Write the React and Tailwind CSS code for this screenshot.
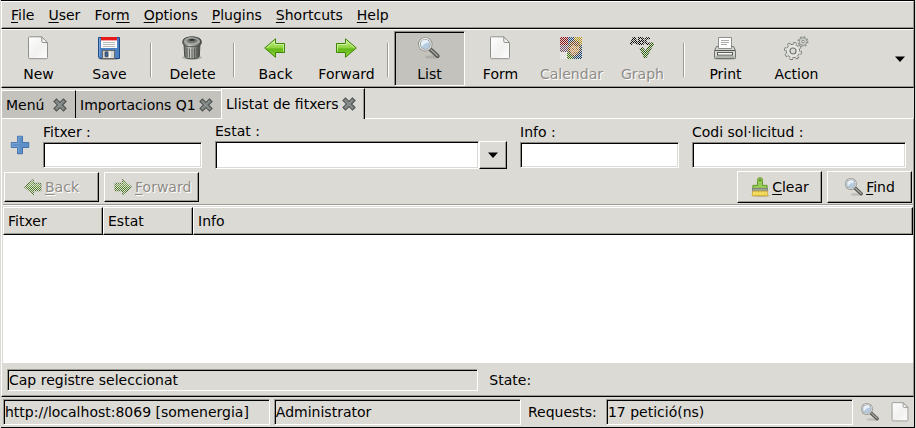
import React from "react";

const sunken =
  "border pl-px border-t-[#9c9a91] border-l-[#9c9a91] border-b-white border-r-white shadow-[inset_1px_1px_0_#000]";
const entry =
  "block w-full rounded-none bg-white px-1 outline-none border border-t-[#8d8a83] border-l-[#8d8a83] border-b-white border-r-white shadow-[inset_1px_1px_0_#000,inset_-1px_-1px_0_#dcdad5]";
const raised =
  "border border-t-white border-l-white border-b-black border-r-black shadow-[inset_-1px_-1px_0_#9c9a91]";
const ghost = "text-[#8e8c87] [text-shadow:1px_1px_0_#fff]";

function Icon({ size = 24, disabled, id, children }) {
  return (
    <svg width={size} height={size} viewBox="0 0 24 24" className="block shrink-0" aria-hidden="true">
      {children}
      {disabled && (
        <>
          <defs>
            <pattern id={id} width={48 / size} height={48 / size} patternUnits="userSpaceOnUse">
              <rect width={24 / size} height={24 / size} fill="#dcdad5" />
              <rect x={24 / size} y={24 / size} width={24 / size} height={24 / size} fill="#dcdad5" />
            </pattern>
          </defs>
          <rect width="24" height="24" fill={`url(#${id})`} />
        </>
      )}
    </svg>
  );
}

function PageIcon({ size }) {
  return (
    <Icon size={size}>
      <defs>
        <linearGradient id="sheet" x1="0" y1="0" x2="1" y2="1">
          <stop offset="0" stopColor="#fff" />
          <stop offset=".55" stopColor="#f1f1f0" />
          <stop offset="1" stopColor="#fdfdfd" />
        </linearGradient>
      </defs>
      <path d="M3.5 .8H15.8L21.5 6.5V21.5Q21.5 22.7 20.3 22.7H3.7Q2.5 22.7 2.5 21.5V1.8Q2.5 .8 3.5 .8Z" fill="url(#sheet)" stroke="#8e908c" />
      <path d="M15.8 1V5.2Q15.8 6.5 17 6.5H21.4Z" fill="#f7f7f6" stroke="#8e908c" />
    </Icon>
  );
}

function SaveIcon() {
  return (
    <Icon>
      <ellipse cx="12" cy="22.6" rx="11" ry="1.2" fill="#8b8a86" />
      <path d="M1.5 1.5H22.5V22.5H3L1.5 21Z" fill="#4b80c1" stroke="#204a87" />
      <path d="M2.5 2V20.5" stroke="#79a5d8" />
      <rect x="4" y="1" width="16" height="11" fill="#fbfbfb" />
      <rect x="4" y="1" width="16" height="3.4" fill="#e8191a" />
      <path d="M6 6.5H18M6 8.5H18M6 10.5H18" stroke="#b9bcb8" />
      <rect x="5.5" y="14.5" width="12" height="8" fill="#d4d6d3" stroke="#676a67" />
      <rect x="8" y="15.8" width="3" height="5" rx=".5" fill="#3c66a0" stroke="#333" strokeWidth=".6" />
      <path d="M12.8 15.5V22" stroke="#f8f8f8" strokeWidth="1.5" />
    </Icon>
  );
}

function TrashIcon() {
  return (
    <Icon>
      <defs>
        <linearGradient id="can" x1="0" x2="1">
          <stop offset="0" stopColor="#555753" />
          <stop offset=".35" stopColor="#d0d2cd" />
          <stop offset=".7" stopColor="#858782" />
          <stop offset="1" stopColor="#3d3f3c" />
        </linearGradient>
      </defs>
      <ellipse cx="12" cy="21.5" rx="10" ry="2" fill="#aeada8" />
      <path d="M4 8H20L19.3 20Q18.8 22.8 12 22.8T4.7 20Z" fill="url(#can)" stroke="#4d4f4c" />
      <path d="M7 12V21M9.5 12.5V21.8M12 12.5V22M14.5 12.5V21.8M17 12V21" stroke="#555753" strokeWidth=".9" />
      <path d="M2.8 5.8Q2.8 2.3 7 1.6L10 .8H14L17 1.6Q21.2 2.3 21.2 5.8V7.3Q20 10.8 12 10.8T2.8 7.3Z" fill="url(#can)" stroke="#4d4f4c" />
      <ellipse cx="12" cy="5.4" rx="8" ry="3.6" fill="#a7a9a4" />
      <ellipse cx="12" cy="4.8" rx="5.5" ry="2.4" fill="#777975" />
      <path d="M9 3.5Q12 1.8 15 3.5L14.2 5.3Q12 4 9.8 5.3Z" fill="#343634" />
    </Icon>
  );
}

function ArrowIcon({ right, size, disabled, id }) {
  const [light, mid, deep, edge] = disabled
    ? ["#9fc47a", "#6c9d45", "#4b8122", "#2a5608"]
    : ["#c3ee8d", "#92d441", "#63b818", "#3c8703"];
  return (
    <Icon size={size} disabled={disabled} id={id}>
      <defs>
        <linearGradient id={id + "fill"} x1="0" y1="0" x2="0" y2="1">
          <stop offset="0" stopColor={light} />
          <stop offset=".48" stopColor={mid} />
          <stop offset=".55" stopColor={deep} />
          <stop offset="1" stopColor={mid} />
        </linearGradient>
      </defs>
      <g transform={right ? "translate(24 0) scale(-1 1)" : undefined}>
        <path d="M1.7 12L12.5 2.8V7.5H21.5V16.5H12.5V21.3Z" fill={`url(#${id}fill)`} stroke={edge} strokeLinejoin="round" />
        {!disabled && (
          <path d="M3.5 12L11.5 5V8.5H20.5V15.5" fill="none" stroke="#d5f5a8" strokeWidth=".8" />
        )}
      </g>
    </Icon>
  );
}

function SearchIcon({ size }) {
  return (
    <Icon size={size}>
      <ellipse cx="15" cy="21" rx="7" ry="1.6" fill="#7d7c77" opacity=".3" />
      <path d="M13.2 13.2L20.6 20" stroke="#555753" strokeWidth="4.2" strokeLinecap="round" />
      <path d="M14 13.8L20.6 19.8" stroke="#a9aca7" strokeWidth="1.4" strokeLinecap="round" strokeDasharray="1.4 .8" />
      <circle cx="8.3" cy="8.3" r="6" fill="#b6cbdf" stroke="#7f827d" strokeWidth="2.3" />
      <circle cx="8.3" cy="8.3" r="5.9" fill="none" stroke="#eeeeec" strokeWidth="1.1" />
      <path d="M4 8.3A4.3 4.3 0 0 1 12.3 6.5Q7 6.7 5 11Q4 10 4 8.3Z" fill="#e9f1f8" />
    </Icon>
  );
}

function CalendarIcon() {
  return (
    <Icon disabled id="calendar-stipple">
      <rect x="1" y="1" width="22" height="22" fill="#555" />
      <rect x="1" y="1" width="8" height="8" fill="#8d0a10" />
      <rect x="9" y="1" width="6" height="8" fill="#20457a" />
      <rect x="15" y="1" width="8" height="8" fill="#b8960c" />
      <rect x="1" y="9" width="8" height="7" fill="#75506f" />
      <rect x="9" y="9" width="6" height="7" fill="#a8590c" />
      <rect x="15" y="9" width="8" height="7" fill="#1d4870" />
      <rect x="1" y="16" width="7" height="7" fill="#f0f0ee" />
      <rect x="8" y="16" width="6" height="7" fill="#437a10" />
      <rect x="14" y="16" width="9" height="7" fill="#0f3770" />
      <path d="M10 11Q11 5 16 5Q21 6 21 13Q20 19 15 20Q10 19 10 11Z" fill="#d49a55" stroke="#69401a" strokeWidth="1.5" />
      <path d="M10 8Q15 3 21 9L18 11L14 9L11 12Z" fill="#7d4814" />
      <path d="M13 13H15M17 13H19M14 17H18" stroke="#69401e" />
    </Icon>
  );
}

function SpellIcon() {
  return (
    <Icon disabled id="spell-stipple">
      <g fill="none" stroke="#000" strokeWidth="2.1">
        <path d="M.7 8.5L3.4 2H4.7L7.2 8.5M2.2 6.3H5.8" />
        <path d="M9 2V8H11.5Q13.5 8 13.5 6.5T11.5 5H9H11.3Q13 5 13 3.5T11.3 2Z" />
        <path d="M20 3Q17 1 15.7 3.3Q15 5 16 7Q17.8 8.8 20 7.2" />
      </g>
      <path d="M10.5 13L12.5 12L15.5 16L21.5 7L23.5 7.5L16 21.2H14.5Z" fill="#3f8210" stroke="#1f4c04" strokeWidth="1.4" />
    </Icon>
  );
}

function PrintIcon() {
  return (
    <Icon>
      <ellipse cx="12" cy="22.4" rx="11.5" ry="1.4" fill="#b0afaa" />
      <path d="M3.5 10.5H20.5L22.5 14.5V21.5Q22.5 22.5 21.5 22.5H2.5Q1.5 22.5 1.5 21.5V14.5Z" fill="#d3d7cf" stroke="#70736e" />
      <path d="M5.5 1.5H18.5V12.5H5.5Z" fill="#fff" stroke="#8d908a" />
      <path d="M8 4.5H16M8 6.5H16M8 8.5H14" stroke="#a9aca7" />
      <path d="M2 14.5H22" stroke="#555753" />
      <rect x="4.5" y="16.5" width="15" height="2.6" fill="#fafafa" stroke="#5c5e5a" />
      <path d="M2.5 21H21.5" stroke="#8e918b" />
    </Icon>
  );
}

function GearsIcon() {
  return (
    <svg width="26" height="24" viewBox="0 0 26 24" className="block shrink-0" aria-hidden="true">
      <g fill="none">
        <circle cx="10" cy="15" r="7.5" stroke="#777975" strokeWidth="3" strokeDasharray="3.2 2.69" />
        <circle cx="10" cy="15" r="6.8" fill="#e4e6e1" stroke="#777975" />
        <circle cx="10" cy="15" r="7.2" stroke="#e4e6e1" strokeWidth="1.8" strokeDasharray="2.4 3.25" strokeDashoffset="-.4" />
        <circle cx="10" cy="15" r="3" fill="#dcdad5" stroke="#777975" strokeWidth="1.2" />
        <circle cx="20" cy="5.5" r="4.5" stroke="#92948f" strokeWidth="2" strokeDasharray="1.8 1.73" />
        <circle cx="20" cy="5.5" r="3.9" fill="#cfd1cc" stroke="#92948f" />
        <circle cx="20" cy="5.5" r="1.3" fill="#eee" stroke="#858782" />
      </g>
    </svg>
  );
}

function BrushIcon() {
  return (
    <Icon size={20}>
      <ellipse cx="13" cy="22.5" rx="10" ry="1.3" fill="#b3b09f" />
      <path d="M9 10V3.8Q9 .8 12 .8T15 3.8V10H20.5V15H3.5V10Z" fill="#99ca57" stroke="#5f9a28" strokeWidth="1.2" />
      <circle cx="12" cy="4" r="1.2" fill="#417b12" />
      <rect x="3" y="13.5" width="18" height="3.5" fill="#9ba098" stroke="#6b6f68" strokeWidth=".7" />
      <path d="M3.5 17H20.5Q20.5 21 22 22.5H2.5Z" fill="#f5e065" stroke="#c9a52a" />
      <path d="M7 18V22M10.5 18V22M14 18V22M17.5 18V22" stroke="#e5c944" />
    </Icon>
  );
}

function CloseIcon() {
  return (
    <Icon size={16}>
      <path d="M6.8 6.8L17.2 17.2M17.2 6.8L6.8 17.2" stroke="#484d4b" strokeWidth="7" strokeLinecap="square" />
      <path d="M6.8 6.8L17.2 17.2M17.2 6.8L6.8 17.2" stroke="#7c8280" strokeWidth="4.2" strokeLinecap="square" />
      <path d="M6 7L17 18M17 6L6 17" stroke="#999f9d" strokeWidth="1.2" />
    </Icon>
  );
}

function PlusIcon() {
  return (
    <Icon size={20}>
      <path d="M9 1.5H15V9H22.5V15H15V22.5H9V15H1.5V9H9Z" fill="#5d8fc8" stroke="#3465a4" />
      <path d="M10 21V14H2.5V10H10V2.5H14" fill="none" stroke="#7fa9d6" />
    </Icon>
  );
}

function Caret() {
  return (
    <svg width="10" height="6" viewBox="0 0 10 6" aria-hidden="true">
      <path d="M0 .5H10L5 6Z" fill="#000" />
    </svg>
  );
}

function Tool({ label, children, pressed, disabled }) {
  const state = pressed
    ? "bg-[#c4c2bd] border-t-[#8d8a83] border-l-[#8d8a83] border-b-white border-r-white shadow-[inset_1px_1px_0_#000]"
    : "border-transparent";
  return (
    <button
      disabled={disabled}
      aria-pressed={pressed}
      className={`flex h-[55px] w-[71px] flex-col items-center border pt-1 ${state} ${disabled ? ghost : ""}`}
    >
      <span className="flex h-6 items-center pr-px">{children}</span>
      <span className="mt-1 leading-5">{label}</span>
    </button>
  );
}

function Separator() {
  return (
    <div className="flex w-3 justify-center pt-3">
      <div className="h-[34px] w-[2px] border-l border-r border-l-[#9c9a91] border-r-white" />
    </div>
  );
}

function Tab({ label, active, width }) {
  return (
    <div
      className={`flex items-center justify-between border-t border-t-white pl-1 pr-[7px] ${width} ${
        active
          ? "z-10 -mb-px h-[31px] border-l border-r border-l-white border-r-black bg-[#dcdad5] shadow-[inset_-1px_0_0_#9c9a91]"
          : "h-7 bg-[#c4c2bd]"
      }`}
    >
      <button role="tab" aria-selected={!!active} className="whitespace-nowrap">{label}</button>
      <button aria-label={`Close ${label}`}><CloseIcon /></button>
    </div>
  );
}

function Field({ id, label }) {
  return (
    <div>
      <label htmlFor={id} className="block h-5 leading-5">{label}</label>
      <input id={id} type="text" className={`h-[26px] ${entry}`} />
    </div>
  );
}

const menus = [
  ["", "F", "ile"],
  ["", "U", "ser"],
  ["For", "m", ""],
  ["", "O", "ptions"],
  ["", "P", "lugins"],
  ["", "S", "hortcuts"],
  ["", "H", "elp"],
];

export default function App() {
  return (
    <div className="flex min-h-screen bg-[#dcdad5] px-px font-['DejaVu_Sans',sans-serif] text-sm text-black">
      <div className="flex min-w-0 flex-1 flex-col border-t border-r border-b border-black">
        <nav className="flex h-7 items-center gap-[14px] border border-t-white border-r-[#9c9a91] border-b-black border-l-white pl-[9px] shadow-[inset_0_-1px_0_#9c9a91]">
          {menus.map(([before, key, after]) => (
            <button key={before + key} className="leading-5">
              {before}<u className="underline-offset-2">{key}</u>{after}
            </button>
          ))}
        </nav>

        <div className="flex h-[59px] border border-t-white border-r-[#9c9a91] border-b-black border-l-white pt-px pl-px shadow-[inset_0_-1px_0_#9c9a91]">
          <Tool label="New"><PageIcon /></Tool>
          <Tool label="Save"><SaveIcon /></Tool>
          <Separator />
          <Tool label="Delete"><TrashIcon /></Tool>
          <Separator />
          <Tool label="Back"><ArrowIcon id="tool-back" /></Tool>
          <Tool label="Forward"><ArrowIcon right id="tool-forward" /></Tool>
          <Separator />
          <Tool label="List" pressed><SearchIcon /></Tool>
          <Tool label="Form"><PageIcon /></Tool>
          <Tool label="Calendar" disabled><CalendarIcon /></Tool>
          <Tool label="Graph" disabled><SpellIcon /></Tool>
          <Separator />
          <Tool label="Print"><PrintIcon /></Tool>
          <Tool label="Action"><GearsIcon /></Tool>
          <button aria-label="More tools" className="ml-auto px-2"><Caret /></button>
        </div>

        <div role="tablist" className="flex h-[30px] items-end border-l border-white">
          <Tab label="Menú" width="w-[74px] border-r border-r-black" />
          <Tab label="Importacions Q1" width="w-[145px]" />
          <Tab label="Llistat de fitxers" width="w-[144px]" active />
        </div>

        <main className="flex flex-1 flex-col border border-t-white border-r-[#9c9a91] border-b-black border-l-white pt-[2px] pl-px shadow-[inset_0_-1px_0_#9c9a91]">
          <div className="flex items-center pr-[7px]">
            <button aria-label="Add filter" className="flex w-10 shrink-0 justify-center pr-[6px]"><PlusIcon /></button>
            <div className="grid flex-1 grid-cols-[159fr_292fr_159fr_214fr] items-center gap-[13px]">
              <Field id="fitxer" label="Fitxer :" />
              <div>
                <label htmlFor="estat" className="block h-5 leading-5">Estat :</label>
                <div className="relative pr-7">
                  <select id="estat" className={`h-7 appearance-none ${entry}`}>
                    <option value=""></option>
                  </select>
                  <span className={`pointer-events-none absolute top-0 right-0 flex h-7 w-7 items-center justify-center bg-[#dcdad5] ${raised}`}>
                    <Caret />
                  </span>
                </div>
              </div>
              <Field id="info" label="Info :" />
              <Field id="codi" label="Codi sol·licitud :" />
            </div>
          </div>

          <div className="mt-[2px] flex items-center gap-[5px] px-px">
            <button disabled className={`flex h-[30px] w-[95px] items-center gap-[2px] pl-[18px] ${raised} ${ghost}`}>
              <ArrowIcon size={20} disabled id="find-back" />
              <span><u className="underline-offset-2">B</u>ack</span>
            </button>
            <button disabled className={`flex h-[30px] w-[95px] items-center gap-[2px] pl-2 ${raised} ${ghost}`}>
              <ArrowIcon right size={20} disabled id="find-forward" />
              <span><u className="underline-offset-2">F</u>orward</span>
            </button>
            <button className={`ml-auto flex h-8 w-[85px] items-center justify-center gap-[2px] ${raised}`}>
              <BrushIcon />
              <span><u className="underline-offset-2">C</u>lear</span>
            </button>
            <button className={`flex h-8 w-[85px] items-center justify-center gap-[2px] ${raised}`}>
              <SearchIcon size={20} />
              <span><u className="underline-offset-2">F</u>ind</span>
            </button>
          </div>

          <div className="mt-px mb-px h-[2px] border-t border-b border-t-[#9c9a91] border-b-white" />

          <div className="flex-1 bg-white">
            <table className="w-full table-fixed border-separate border-spacing-0 text-left">
              <thead>
                <tr>
                  <th className={`h-7 w-[100px] bg-[#dcdad5] p-0 pl-1 font-normal ${raised}`}>Fitxer</th>
                  <th className={`h-7 w-[90px] bg-[#dcdad5] p-0 pl-1 font-normal ${raised}`}>Estat</th>
                  <th className={`h-7 bg-[#dcdad5] p-0 pl-1 font-normal ${raised}`}>Info</th>
                </tr>
              </thead>
              <tbody />
            </table>
          </div>

          <div className="flex h-[33px] items-center gap-[11px] px-1 pt-px">
            <div className={`h-[22px] flex-[471] leading-5 ${sunken}`}>Cap registre seleccionat</div>
            <div className="flex-[422]">State:</div>
          </div>
        </main>

        <footer className="flex h-[30px] items-center gap-1 pr-1 pl-[2px]">
          <div className={`h-[26px] flex-[267] leading-6 whitespace-nowrap ${sunken}`}>http://localhost:8069 [somenergia]</div>
          <div className={`h-[26px] flex-[247] leading-6 ${sunken}`}>Administrator</div>
          <div className="w-[77px] pl-[3px]">Requests:</div>
          <div className={`h-[26px] flex-[247] leading-6 ${sunken}`}>17 petició(ns)</div>
          <div className="flex gap-[10px] pl-[3px]">
            <button aria-label="Search requests"><SearchIcon size={20} /></button>
            <button aria-label="New request"><PageIcon size={20} /></button>
          </div>
        </footer>
      </div>
    </div>
  );
}
